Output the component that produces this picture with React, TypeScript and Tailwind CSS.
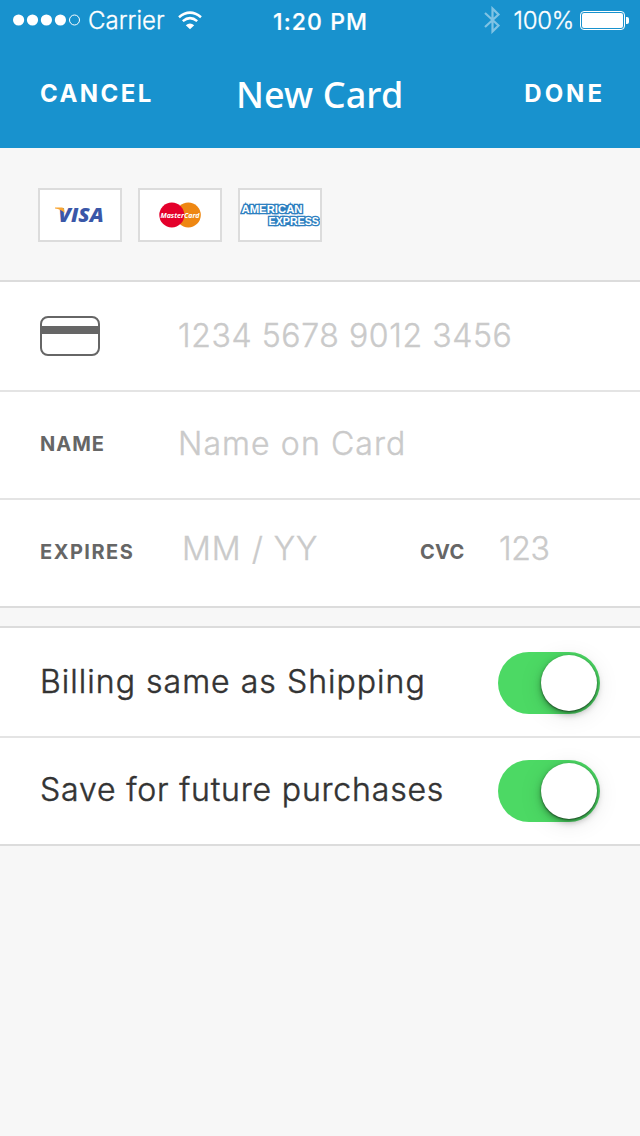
import React from "react";

function StatusBar() {
  return (
    <div className="flex h-10 items-center pl-[13px] pr-[11px] text-white">
      <div className="flex w-[260px] items-center">
        <svg width="68" height="12" viewBox="0 0 68 12" fill="#fff">
          <circle cx="5.6" cy="6" r="5.6" />
          <circle cx="19.5" cy="6" r="5.6" />
          <circle cx="33.4" cy="6" r="5.6" />
          <circle cx="47.4" cy="6" r="5.6" />
          <circle cx="61.5" cy="6" r="5" fill="none" stroke="#fff" />
        </svg>
        <span className="mt-[2px] ml-[7px] text-[24px] leading-[30px] font-light [-webkit-text-stroke:0.3px]">Carrier</span>
        <svg className="ml-[13px]" width="24" height="19" viewBox="0 0 24 19" fill="none" stroke="#fff">
          <path d="M1 6.2 Q12 -2.8 23 6.2" strokeWidth="2.6" />
          <path d="M4.8 10.1 Q12 4.2 19.2 10.1" strokeWidth="2.5" />
          <path d="M7.8 14.2 Q12 10.6 16.2 14.2 L12 18.2 Z" fill="#fff" stroke="none" />
        </svg>
      </div>
      <span className="mt-[4px] text-[23px] leading-[30px] font-medium tracking-[1.1px] [-webkit-text-stroke:0.2px]">1:20 PM</span>
      <div className="ml-auto flex items-center">
        <svg className="opacity-45" width="17" height="28" viewBox="0 0 17 28" fill="none" stroke="#fff" strokeWidth="2.2">
          <path d="M1 7 L14.5 19.5 L8.5 25.5 V2.5 L14.5 8.5 L1 21" />
        </svg>
        <span className="mt-[2px] ml-[13px] text-[24px] leading-[30px] font-light tracking-[-0.3px] [-webkit-text-stroke:0.3px]">100%</span>
        <svg className="ml-[6px]" width="49" height="19" viewBox="0 0 49 19" fill="none">
          <rect x=".5" y=".5" width="44" height="18" rx="3.5" stroke="#fff" />
          <rect x="2" y="2" width="41" height="15" rx="2" fill="#fff" />
          <path d="M46 6 H47 Q49 6 49 8 V11 Q49 13 47 13 H46 Z" fill="#fff" />
        </svg>
      </div>
    </div>
  );
}

function CardBox({ children }: { children: React.ReactNode }) {
  return (
    <div className="h-[54px] w-[84px] border-2 border-[#dcdcdc] bg-white">
      {children}
    </div>
  );
}

function VisaLogo() {
  return (
    <svg width="80" height="50" viewBox="0 0 80 50">
      <text x="18.2" y="31.9" fontFamily="Open Sans, sans-serif" fontWeight="800" fontStyle="italic" fontSize="19.5" fill="#3a57a8" textLength="45.5" lengthAdjust="spacingAndGlyphs">VISA</text>
      <path d="M15 17.6 H22 Q23.8 17.6 24.2 19.5 L24.6 23 Q21 19 15 18.4 Z" fill="#f9a533" />
    </svg>
  );
}

function MasterCardLogo() {
  return (
    <svg width="80" height="50" viewBox="0 0 80 50">
      <circle cx="48.3" cy="25" r="12.5" fill="#ee8712" />
      <circle cx="31.8" cy="25" r="12.5" fill="#e4002b" />
      <text x="20.5" y="27.6" fontFamily="Noto Sans, sans-serif" fontWeight="700" fontStyle="italic" fontSize="7.6" fill="#fff" textLength="39" lengthAdjust="spacingAndGlyphs">MasterCard</text>
    </svg>
  );
}

function AmexLogo() {
  return (
    <svg width="80" height="50" viewBox="0 0 80 50" fontFamily="Liberation Sans, sans-serif" fontWeight="700" fontSize="10" fill="#fff" stroke="#2e80c0" strokeWidth="2.6" strokeLinejoin="miter" style={{ paintOrder: "stroke" }}>
      <rect x="4" y="15" width="57" height="8" fill="#2e80c0" stroke="none" />
      <rect x="29" y="27" width="49" height="8" fill="#2e80c0" stroke="none" />
      <text x="1.5" y="22.5" textLength="61" lengthAdjust="spacingAndGlyphs">AMERICAN</text>
      <text x="28.5" y="34.5" textLength="50.5" lengthAdjust="spacingAndGlyphs">EXPRESS</text>
    </svg>
  );
}

function CardIcon() {
  return (
    <svg width="60" height="40" viewBox="0 0 60 40">
      <rect x="1" y="1" width="58" height="38" rx="7" fill="none" stroke="#666" strokeWidth="2" />
      <rect x="1" y="10" width="58" height="8" fill="#666" />
    </svg>
  );
}

function Toggle() {
  return (
    <div className="flex h-[62px] w-[102px] items-center justify-end rounded-full bg-[#4cd964] pr-[3px]">
      <div className="h-14 w-14 rounded-full bg-white shadow-[0_1px_2px_rgba(0,0,0,0.5),0_3px_7px_rgba(0,0,0,0.35),0_4px_24px_rgba(0,0,0,0.1)]" />
    </div>
  );
}

export default function App() {
  return (
    <div className="flex h-[1136px] w-[640px] flex-col overflow-hidden bg-[#f7f7f7] font-['Inter',sans-serif] whitespace-nowrap">
      <header className="h-[148px] bg-[#1892ce] text-white">
        <StatusBar />
        <nav className="flex h-[108px] items-center pr-[35px] pl-[40px]">
          <span className="w-[196px] text-[24px] leading-[30px] font-bold tracking-[2.4px]">CANCEL</span>
          <span className="mt-[2px] font-['Noto_Sans',sans-serif] text-[36px] leading-[44px] font-medium tracking-[0.1px]">New Card</span>
          <span className="ml-auto text-[24px] leading-[30px] font-bold tracking-[3px]">DONE</span>
        </nav>
      </header>

      <div className="flex h-[132px] gap-4 pt-10 pl-[38px]">
        <CardBox><VisaLogo /></CardBox>
        <CardBox><MasterCardLogo /></CardBox>
        <CardBox><AmexLogo /></CardBox>
      </div>

      <section className="border-y-2 border-[#dcdcdc] bg-white text-[32px] leading-[40px] font-light text-[#cacaca]">
        <div className="flex h-[108px] items-center pl-10">
          <div className="w-[138px]"><CardIcon /></div>
          <span className="tracking-[0.6px] [-webkit-text-stroke:0.4px]">1234 5678 9012 3456</span>
        </div>
        <div className="flex h-[108px] items-center border-t-2 border-[#e4e4e4] pb-[3px] pl-10">
          <span className="w-[138px] text-[20px] leading-[26px] font-bold tracking-[1px] text-[#666]">NAME</span>
          <span className="tracking-[1.1px] [-webkit-text-stroke:0.4px]">Name on Card</span>
        </div>
        <div className="flex h-[108px] items-center border-t-2 border-[#e4e4e4] pb-[3px] pl-10">
          <span className="w-[142px] text-[20px] leading-[26px] font-bold tracking-[1.5px] text-[#666]">EXPIRES</span>
          <span className="mb-[5px] w-[238px] tracking-[1px] [-webkit-text-stroke:0.4px]">MM / YY</span>
          <span className="w-[79px] text-[20px] leading-[26px] font-bold tracking-[0.3px] text-[#666]">CVC</span>
          <span className="mb-[5px] tracking-[-0.4px] [-webkit-text-stroke:0.4px]">123</span>
        </div>
      </section>

      <section className="mt-[18px] border-y-2 border-[#dcdcdc] bg-white text-[32px] leading-[40px] font-light text-[#333]">
        <div className="flex h-[108px] items-center justify-between pt-[2px] pr-10 pl-10">
          <span className="mb-[3px] tracking-[1.03px] [-webkit-text-stroke:0.5px]">Billing same as Shipping</span>
          <Toggle />
        </div>
        <div className="flex h-[108px] items-center justify-between border-t-2 border-[#e4e4e4] pr-10 pl-10">
          <span className="mb-[3px] tracking-[0.83px] [-webkit-text-stroke:0.5px]">Save for future purchases</span>
          <Toggle />
        </div>
      </section>
    </div>
  );
}
